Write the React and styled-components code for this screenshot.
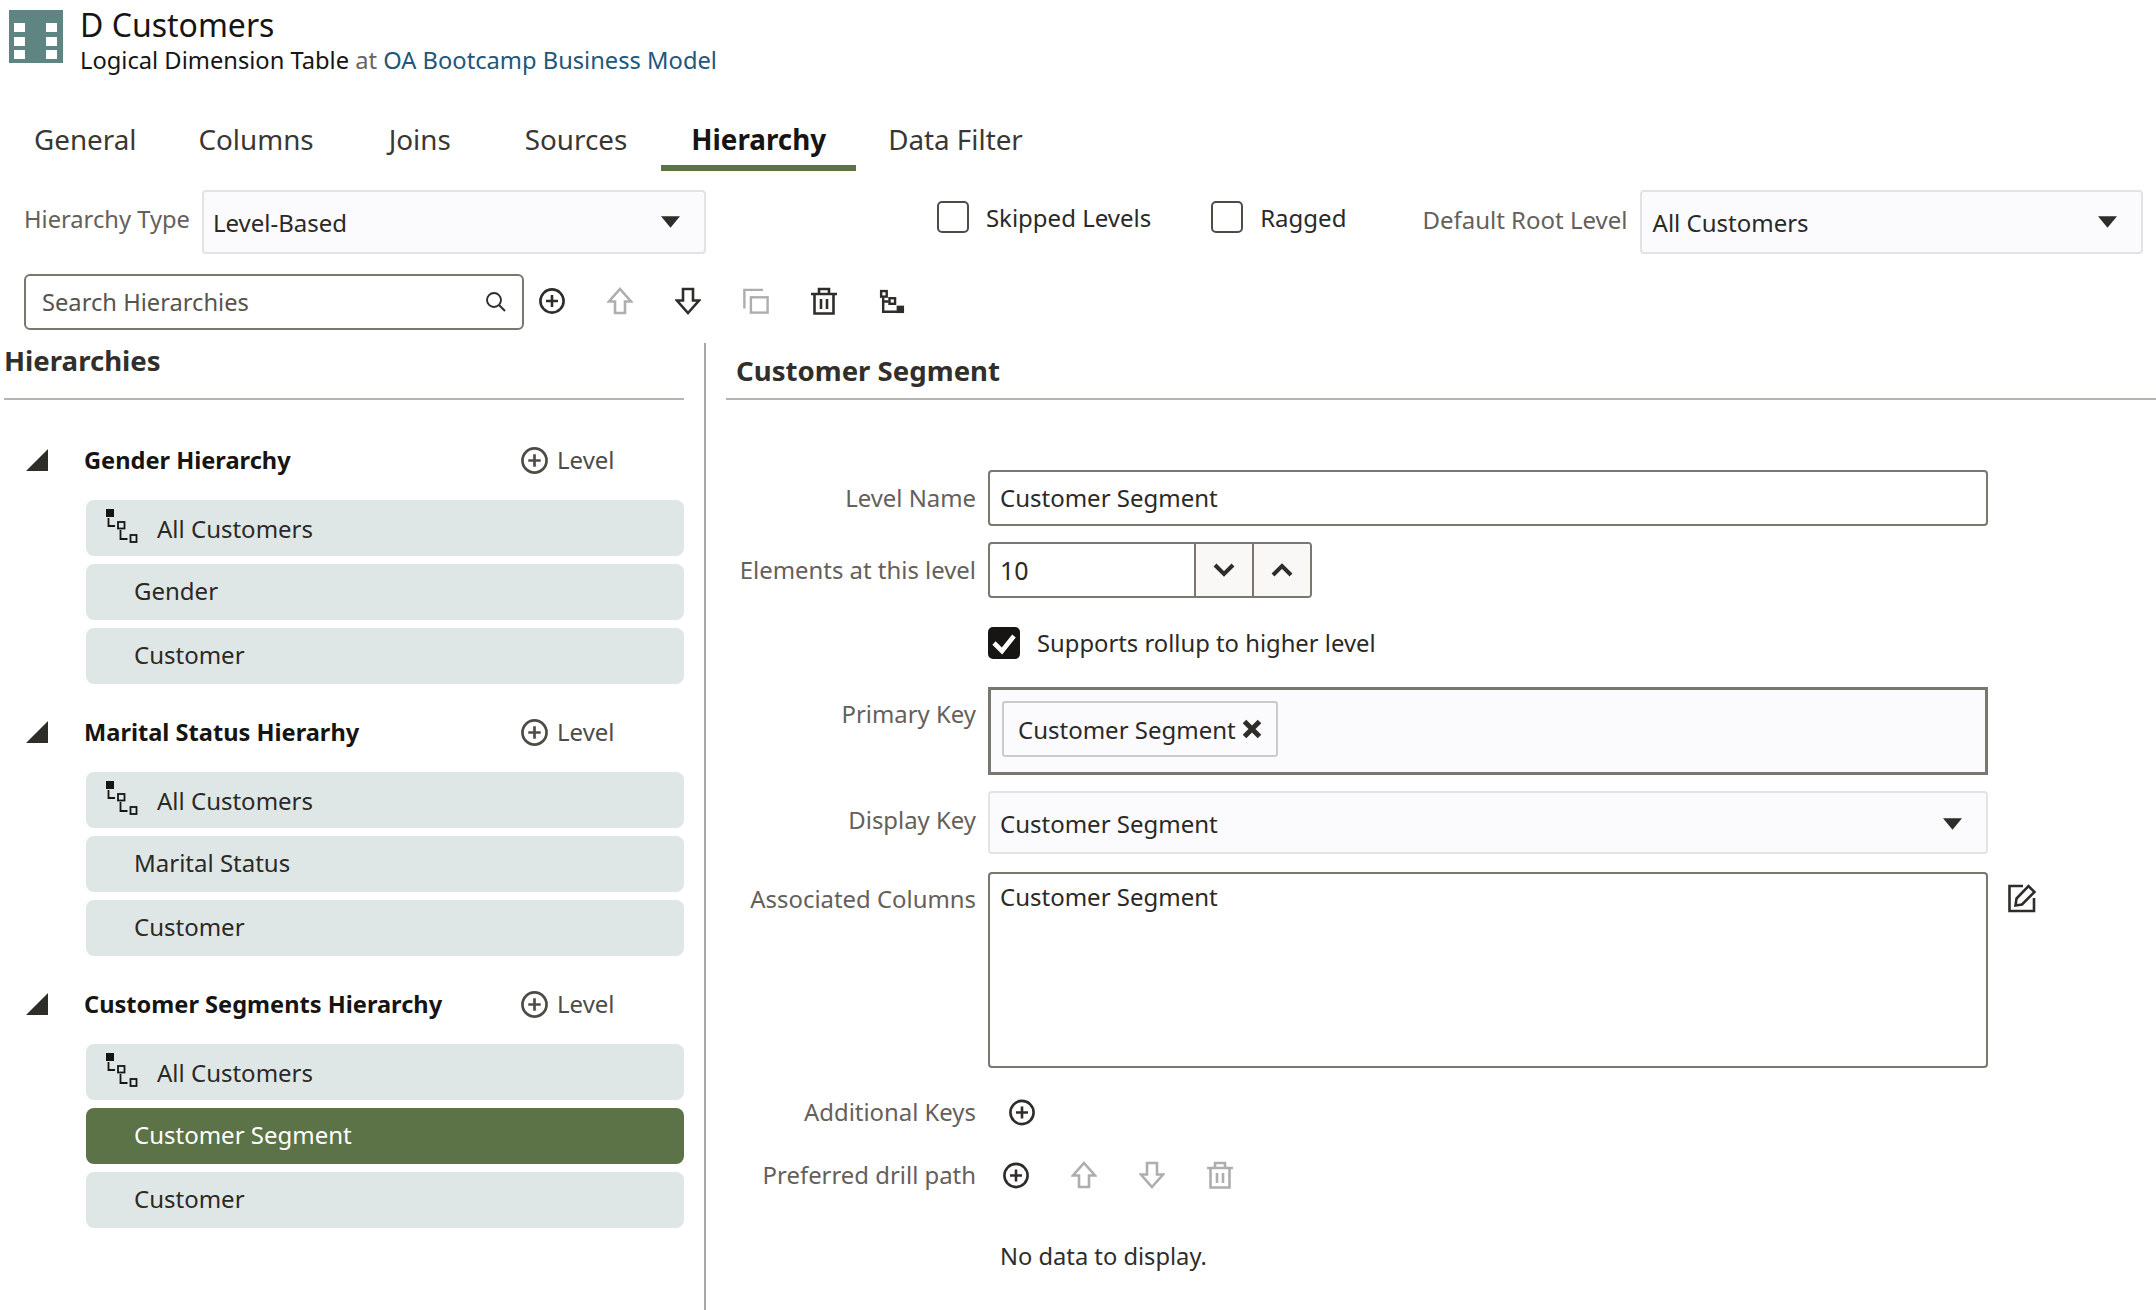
import React from "react";
import styled, { createGlobalStyle } from "styled-components";

const GlobalStyle = createGlobalStyle`
  html, body {
    margin: 0;
    padding: 0;
    background: #fff;
  }
  body {
    font-family: "Noto Sans", "Open Sans", sans-serif;
    color: #161513;
  }
  * {
    box-sizing: border-box;
  }
`;

const Page = styled.div`
  width: 2156px;
  height: 1310px;
  overflow: hidden;
  background: #fff;
`;

const Header = styled.header`
  display: flex;
  gap: 17px;
  height: 113px;
  padding: 10px 0 0 9px;
`;

const TitleBlock = styled.div`
  display: flex;
  flex-direction: column;
  margin-top: -3px;
`;

const Title = styled.div`
  font-size: 32px;
  line-height: 36px;
  color: #161513;
`;

const Subtitle = styled.div`
  font-size: 23.7px;
  line-height: 34px;
  color: #161513;
`;

const Muted = styled.span`
  color: #6a6560;
`;

const Link = styled.span`
  color: #22577a;
`;

const Tabs = styled.nav`
  display: flex;
  height: 58px;
  padding-left: 4px;
`;

const Tab = styled.div`
  display: flex;
  align-items: center;
  height: 58px;
  padding: 0 30px;
  margin-right: ${(p) => p.$gap || 0}px;
  font-size: 27.8px;
  font-weight: ${(p) => (p.$active ? 700 : 400)};
  color: ${(p) => (p.$active ? "#161513" : "#3a3733")};
  border-bottom: 6px solid ${(p) => (p.$active ? "#5c7347" : "transparent")};
  line-height: 40px;
`;

const OptionsRow = styled.div`
  display: flex;
  align-items: center;
  height: 64px;
  margin-top: 19px;
  padding-left: 24px;
`;

const OptionLabel = styled.span`
  font-size: 23.7px;
  color: #65605a;
  white-space: nowrap;
  margin-right: 12px;
  margin-bottom: 6px;
`;

const Select = styled.div`
  display: flex;
  align-items: center;
  justify-content: space-between;
  width: ${(p) => (p.$width ? `${p.$width}px` : "100%")};
  height: ${(p) => p.$height || 64}px;
  padding: ${(p) => p.$pt ?? 0}px 24px 0 ${(p) => p.$pl || 9}px;
  background: #fbfbfd;
  border: 2px solid #e3e3e3;
  border-radius: 4px;
  font-size: 24px;
  color: #2b2926;
`;

const CheckGroup = styled.div`
  display: flex;
  align-items: center;
  gap: 17px;
  margin-left: ${(p) => p.$ml}px;
  margin-bottom: 10px;
  font-size: 24px;
  color: #2b2926;
`;

const RootLevelLabel = styled(OptionLabel)`
  margin-left: 76px;
  font-size: 24px;
`;

const CheckBox = styled.span`
  display: block;
  width: 32px;
  height: 32px;
  border: 2px solid #4f4c48;
  border-radius: 5px;
  background: #fff;
`;

const Toolbar = styled.div`
  display: flex;
  align-items: center;
  height: 55px;
  margin-top: 21px;
  padding-left: 24px;
`;

const SearchBox = styled.div`
  display: flex;
  align-items: center;
  justify-content: space-between;
  width: 500px;
  height: 56px;
  margin: -1px 15px 0 0;
  padding: 0 15px 0 16px;
  border: 2px solid #7a7670;
  border-radius: 6px;
  font-size: 23.7px;
  color: #57534e;
`;

const ToolIcons = styled.div`
  display: flex;
  align-items: center;
  gap: 42px;
  margin-top: -4px;
`;

const IconSlot = styled.span`
  display: flex;
  align-items: center;
  justify-content: center;
  width: 26px;
  height: 28px;
  color: ${(p) => (p.$off ? "#aeaeae" : "#2f2d2a")};
`;

const Body = styled.div`
  display: grid;
  grid-template-columns: 706px 1fr;
  margin-top: 13px;
  height: 967px;
`;

const LeftPanel = styled.section`
  border-right: 2px solid #a9a7a3;
`;

const PanelHeading = styled.h2`
  margin: 0;
  height: 57px;
  font-size: 27.6px;
  font-weight: 700;
  color: #312f2c;
  border-bottom: 2px solid #b5b3ae;
`;

const LeftHeading = styled(PanelHeading)`
  width: 680px;
  margin-left: 4px;
  line-height: 35px;
`;

const RightHeading = styled(PanelHeading)`
  padding-left: 10px;
  line-height: 54px;
`;

const GroupList = styled.div`
  padding-top: 20px;
  width: 684px;
`;

const Group = styled.div`
  margin-bottom: 8px;
`;

const GroupHeader = styled.div`
  display: flex;
  align-items: center;
  height: 80px;
  padding-left: 26px;
`;

const GroupName = styled.div`
  flex: 1;
  margin: -1px 0 0 36px;
  font-size: 23.6px;
  font-weight: 700;
  color: #161513;
`;

const AddLevel = styled.div`
  display: flex;
  align-items: center;
  gap: 9px;
  width: 163px;
  font-size: 24px;
  line-height: 30px;
  color: #4f4c48;
`;

const Rows = styled.div`
  display: flex;
  flex-direction: column;
  gap: 8px;
  margin-left: 86px;
`;

const Row = styled.div`
  display: flex;
  align-items: center;
  gap: 19px;
  height: 56px;
  padding-left: ${(p) => (p.$root ? 20 : 48)}px;
  border-radius: 8px;
  font-size: 24px;
  background: ${(p) => (p.$selected ? "#5c7347" : "#dfe7e6")};
  color: ${(p) => (p.$selected ? "#fff" : "#2b2926")};
`;

const RowText = styled.span`
  margin-top: ${(p) => p.$mt || 0}px;
  padding-bottom: 4px;
`;

const RightPanel = styled.section`
  padding-left: 20px;
`;

const Form = styled.div`
  padding-top: 70px;
`;

const Field = styled.div`
  display: grid;
  grid-template-columns: 250px 1000px auto;
  column-gap: 12px;
  margin-top: ${(p) => p.$mt || 0}px;
  align-items: ${(p) => p.$align || "center"};
`;

const FieldLabel = styled.label`
  text-align: right;
  font-size: 23.9px;
  line-height: 32px;
  color: #65605a;
  white-space: nowrap;
  padding-top: ${(p) => p.$pt || 0}px;
`;

const TextInput = styled.div`
  display: flex;
  align-items: center;
  height: 56px;
  padding: 0 0 1px 10px;
  border: 2px solid #7a7670;
  border-radius: 4px;
  font-size: 24px;
  color: #2b2926;
`;

const Stepper = styled.div`
  display: flex;
  width: 324px;
  height: 56px;
  border: 2px solid #7a7670;
  border-radius: 4px;
  overflow: hidden;
  font-size: 25px;
  color: #2b2926;
`;

const StepValue = styled.div`
  flex: 1;
  display: flex;
  align-items: center;
  padding: 0 0 1px 10px;
`;

const StepButton = styled.div`
  display: flex;
  align-items: center;
  justify-content: center;
  width: 58px;
  background: #f9f8f6;
  border-left: 2px solid #7a7670;
  color: #2f2d2a;
`;

const CheckedRow = styled.div`
  display: flex;
  align-items: center;
  gap: 17px;
  font-size: 23.8px;
  line-height: 30px;
  color: #2b2926;
`;

const CheckedBox = styled.span`
  display: block;
  width: 32px;
  height: 32px;
  border-radius: 5px;
  background: #161513;
`;

const TagField = styled.div`
  display: flex;
  align-items: flex-start;
  height: 88px;
  padding: 11px 0 0 11px;
  background: #fbfbfd;
  border: 3px solid #7a7670;
`;

const Tag = styled.div`
  display: flex;
  align-items: center;
  gap: 6px;
  height: 56px;
  padding: 0 14px 0 14px;
  background: #fbfbfd;
  border: 2px solid #cbcbcb;
  border-radius: 3px;
  font-size: 24px;
  color: #2b2926;
`;

const TextArea = styled.div`
  height: 196px;
  padding: 7px 10px;
  border: 2px solid #7a7670;
  border-radius: 4px;
  font-size: 24px;
  line-height: 32px;
  color: #2b2926;
`;

const EditButton = styled.span`
  display: block;
  margin: 11px 0 0 7px;
  color: #2f2d2a;
`;

const InlineIcons = styled.div`
  display: flex;
  align-items: center;
  gap: 42px;
  margin-left: ${(p) => p.$ml || 0}px;
`;

const NoData = styled.div`
  margin: 49px 0 0 274px;
  font-size: 23.7px;
  line-height: 32px;
  color: #2f2d2a;
`;

const TreeRowSvg = styled.svg`
  margin-top: -4px;
`;

const Caret = () => (
  <svg width="19" height="12" viewBox="0 0 20 12">
    <path d="M0 0h20L10 12z" fill="#2f2d2a" />
  </svg>
);

const PlusCircle = ({ size = 26 }) => (
  <svg width={size} height={size} viewBox="0 0 26 26" fill="none" stroke="currentColor" strokeWidth="2.6">
    <circle cx="13" cy="13" r="11.6" />
    <path d="M13 7v12M7 13h12" />
  </svg>
);

const ArrowUp = () => (
  <svg width="26" height="28" viewBox="0 0 26 28" fill="none" stroke="currentColor" strokeWidth="2.6" strokeLinejoin="miter">
    <path d="M13 2 24 14.5h-6V26H8V14.5H2z" />
  </svg>
);

const ArrowDown = () => (
  <svg width="26" height="28" viewBox="0 0 26 28" fill="none" stroke="currentColor" strokeWidth="2.6" strokeLinejoin="miter">
    <path d="M13 26 24 13.5h-6V2H8v11.5H2z" />
  </svg>
);

const CopyIcon = () => (
  <svg width="28" height="28" viewBox="0 0 28 28" fill="none" stroke="currentColor" strokeWidth="2.6">
    <path d="M1.5 22V2h20" />
    <rect x="8.5" y="10" width="18" height="16.5" />
  </svg>
);

const TrashIcon = () => (
  <svg width="26" height="28" viewBox="0 0 26 28" fill="none" stroke="currentColor" strokeWidth="2.6">
    <path d="M0 7h26M8 7V2h10v5" />
    <path d="M3.5 7v19.5h19V7" />
    <path d="M10 12v10M16 12v10" />
  </svg>
);

const TreeTool = () => (
  <svg width="28" height="28" viewBox="0 0 28 28" fill="none" stroke="#2f2d2a" strokeWidth="2.6">
    <rect x="2.3" y="3.3" width="6" height="6" />
    <path d="M4.5 10v15.5h15M4.5 14.5h6" />
    <rect x="11.3" y="11" width="6" height="6" />
    <rect x="19" y="19" width="8" height="8" fill="#2f2d2a" stroke="none" />
  </svg>
);

const TreeRow = ({ color = "#161513" }) => (
  <TreeRowSvg width="32" height="34" viewBox="0 0 32 34" fill="none" stroke={color} strokeWidth="1.8">
    <rect x="0" y="0" width="8" height="8" fill={color} stroke="none" />
    <path d="M2.5 9v8h6.5" />
    <rect x="12" y="13" width="6.5" height="6.5" />
    <path d="M14.5 21v9h7" />
    <rect x="24.5" y="26" width="6" height="7" />
  </TreeRowSvg>
);

const Triangle = () => (
  <svg width="22" height="22" viewBox="0 0 22 22">
    <path d="M22 0v22H0z" fill="#2f2d2a" />
  </svg>
);

const SearchGlyph = () => (
  <svg width="22" height="22" viewBox="0 0 22 22" fill="none" stroke="#2f2d2a" strokeWidth="1.9">
    <circle cx="9" cy="9" r="7" />
    <path d="m14 14 6 6" />
  </svg>
);

const Chevron = ({ up }) => (
  <svg width="22" height="14" viewBox="0 0 22 14" fill="none" stroke="currentColor" strokeWidth="4">
    <path d={up ? "M2 12 11 3l9 9" : "M2 2l9 9 9-9"} />
  </svg>
);

const Tick = () => (
  <svg width="32" height="32" viewBox="0 0 32 32" fill="none" stroke="#fff" strokeWidth="4.6">
    <path d="M6 16l8 8L26 9" />
  </svg>
);

const CloseX = () => (
  <svg width="20" height="20" viewBox="0 0 20 20" fill="none" stroke="#2f2d2a" strokeWidth="5">
    <path d="M2.5 2.5l15 15M17.5 2.5l-15 15" />
  </svg>
);

const EditIcon = () => (
  <svg width="30" height="30" viewBox="0 0 30 30" fill="none" stroke="currentColor" strokeWidth="2.6">
    <path d="M16 3H2.5v25H27V15" />
    <path d="M9.5 15.5 21.5 3l6 6L15 21.5l-6.5 1z" />
  </svg>
);

const TableLogo = () => (
  <svg width="54" height="53" viewBox="0 0 54 53">
    <rect width="54" height="53" fill="#5f8583" />
    {[5, 37].map((x) =>
      [13, 27, 40].map((y) => <rect key={`${x}-${y}`} x={x} y={y} width="11" height="9" fill="#fff" />)
    )}
  </svg>
);

const groups = [
  { name: "Gender Hierarchy", rows: ["Gender", "Customer"] },
  { name: "Marital Status Hierarhy", rows: ["Marital Status", "Customer"] },
  { name: "Customer Segments Hierarchy", rows: ["Customer Segment", "Customer"], selected: "Customer Segment" },
];

export default function App() {
  return (
    <Page>
      <GlobalStyle />
      <Header>
        <TableLogo />
        <TitleBlock>
          <Title>D Customers</Title>
          <Subtitle>
            Logical Dimension Table <Muted>at</Muted> <Link>OA Bootcamp Business Model</Link>
          </Subtitle>
        </TitleBlock>
      </Header>

      <Tabs>
        <Tab $gap={2}>General</Tab>
        <Tab $gap={15}>Columns</Tab>
        <Tab $gap={14}>Joins</Tab>
        <Tab $gap={4}>Sources</Tab>
        <Tab $active $gap={2}>Hierarchy</Tab>
        <Tab>Data Filter</Tab>
      </Tabs>

      <OptionsRow>
        <OptionLabel>Hierarchy Type</OptionLabel>
        <Select $width={504}>
          Level-Based
          <Caret />
        </Select>
        <CheckGroup $ml={231}>
          <CheckBox />
          Skipped Levels
        </CheckGroup>
        <CheckGroup $ml={60}>
          <CheckBox />
          Ragged
        </CheckGroup>
        <RootLevelLabel>Default Root Level</RootLevelLabel>
        <Select $width={503} $pl={11}>
          All Customers
          <Caret />
        </Select>
      </OptionsRow>

      <Toolbar>
        <SearchBox>
          Search Hierarchies
          <SearchGlyph />
        </SearchBox>
        <ToolIcons>
          <IconSlot><PlusCircle /></IconSlot>
          <IconSlot $off><ArrowUp /></IconSlot>
          <IconSlot><ArrowDown /></IconSlot>
          <IconSlot $off><CopyIcon /></IconSlot>
          <IconSlot><TrashIcon /></IconSlot>
          <IconSlot><TreeTool /></IconSlot>
        </ToolIcons>
      </Toolbar>

      <Body>
        <LeftPanel>
          <LeftHeading>Hierarchies</LeftHeading>
          <GroupList>
            {groups.map((g) => (
              <Group key={g.name}>
                <GroupHeader>
                  <Triangle />
                  <GroupName>{g.name}</GroupName>
                  <AddLevel>
                    <PlusCircle size={27} />
                    Level
                  </AddLevel>
                </GroupHeader>
                <Rows>
                  <Row $root>
                    <TreeRow />
                    <RowText $mt={4}>All Customers</RowText>
                  </Row>
                  {g.rows.map((r) => (
                    <Row key={r} $selected={g.selected === r}>
                      <RowText>{r}</RowText>
                    </Row>
                  ))}
                </Rows>
              </Group>
            ))}
          </GroupList>
        </LeftPanel>

        <RightPanel>
          <RightHeading>Customer Segment</RightHeading>
          <Form>
            <Field>
              <FieldLabel>Level Name</FieldLabel>
              <TextInput>Customer Segment</TextInput>
            </Field>
            <Field $mt={16}>
              <FieldLabel>Elements at this level</FieldLabel>
              <Stepper>
                <StepValue>10</StepValue>
                <StepButton><Chevron /></StepButton>
                <StepButton><Chevron up /></StepButton>
              </Stepper>
            </Field>
            <Field $mt={29}>
              <span />
              <CheckedRow>
                <CheckedBox><Tick /></CheckedBox>
                Supports rollup to higher level
              </CheckedRow>
            </Field>
            <Field $mt={28} $align="start">
              <FieldLabel $pt={11}>Primary Key</FieldLabel>
              <TagField>
                <Tag>
                  Customer Segment
                  <CloseX />
                </Tag>
              </TagField>
            </Field>
            <Field $mt={16} $align="start">
              <FieldLabel $pt={13}>Display Key</FieldLabel>
              <Select $height={63} $pt={2} $pl={10}>
                Customer Segment
                <Caret />
              </Select>
            </Field>
            <Field $mt={18} $align="start">
              <FieldLabel $pt={11}>Associated Columns</FieldLabel>
              <TextArea>Customer Segment</TextArea>
              <EditButton><EditIcon /></EditButton>
            </Field>
            <Field $mt={28}>
              <FieldLabel>Additional Keys</FieldLabel>
              <InlineIcons $ml={21}>
                <IconSlot><PlusCircle size={27} /></IconSlot>
              </InlineIcons>
            </Field>
            <Field $mt={31}>
              <FieldLabel>Preferred drill path</FieldLabel>
              <InlineIcons $ml={15}>
                <IconSlot><PlusCircle size={27} /></IconSlot>
                <IconSlot $off><ArrowUp /></IconSlot>
                <IconSlot $off><ArrowDown /></IconSlot>
                <IconSlot $off><TrashIcon /></IconSlot>
              </InlineIcons>
            </Field>
            <NoData>No data to display.</NoData>
          </Form>
        </RightPanel>
      </Body>
    </Page>
  );
}
